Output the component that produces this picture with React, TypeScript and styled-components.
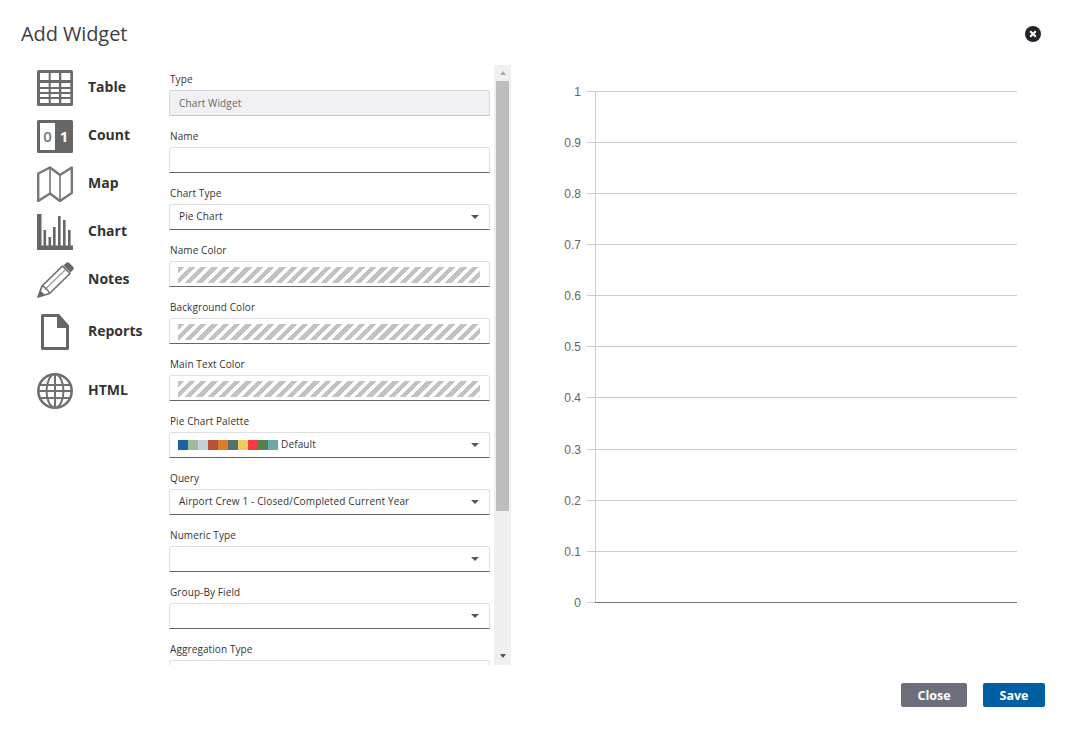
import React from "react";
import styled, { createGlobalStyle } from "styled-components";

const GlobalStyle = createGlobalStyle`
  html, body {
    margin: 0;
    padding: 0;
    background: #fff;
    font-family: "Open Sans", "Liberation Sans", sans-serif;
  }
`;

const TableIcon = () => (
  <svg width="36" height="36" viewBox="0 0 36 36">
    <rect width="36" height="36" rx="1.5" fill="#6b6b6b" />
    {[[3, 8.7], [13.7, 8.3], [24.3, 9]].map(([x, w]) =>
      [[3, 7], [13, 4], [19, 3], [24, 3], [29, 4]].map(([y, h]) => (
        <rect key={`${x}-${y}`} x={x} y={y} width={w} height={h} fill="#fff" />
      ))
    )}
  </svg>
);

const CountIcon = () => (
  <svg width="36" height="33" viewBox="0 0 36 33">
    <rect width="36" height="33" rx="1.5" fill="#666" />
    <rect x="3" y="3" width="15" height="27" fill="#fff" />
    <text x="10.5" y="22" textAnchor="middle" fontFamily="Open Sans" fontWeight="600" fontSize="15" fill="#777">0</text>
    <text x="27" y="22" textAnchor="middle" fontFamily="Open Sans" fontWeight="700" fontSize="15" fill="#fff">1</text>
  </svg>
);

const MapIcon = () => (
  <svg width="36" height="36" viewBox="0 0 36 36" fill="none" stroke="#777" strokeWidth="2.4">
    <path d="M1.2 7.5 13 1.5l10 7.5L34.8 1.5v25.5L23 35 13 27.5 1.2 35z" strokeLinejoin="round" />
    <path d="M13 1.5V27.5M23 9V35" strokeWidth="1.6" />
  </svg>
);

const ChartIcon = () => (
  <svg width="36" height="36" viewBox="0 0 36 36" fill="#666">
    <rect x="0" y="0" width="4.5" height="36" />
    <rect x="0" y="31.5" width="36" height="4.5" />
    <rect x="6.5" y="16" width="2.6" height="17" />
    <rect x="11.5" y="23" width="2.6" height="10" />
    <rect x="16" y="13" width="2.6" height="20" />
    <rect x="21" y="2" width="2.6" height="31" />
    <rect x="26" y="6" width="2.6" height="27" />
    <rect x="31" y="16" width="2.6" height="17" />
  </svg>
);

const NotesIcon = () => (
  <svg width="37" height="36" viewBox="0 0 37 36">
    <path d="M1 35 5 24 25.5 4l7.5 7.5L12.5 31.5z" fill="#fff" stroke="#6b6b6b" strokeWidth="1.6" strokeLinejoin="round" />
    <path d="M8 27.5 28 8" stroke="#999" strokeWidth="1.2" />
    <path d="M5 24c2.5.5 6.5 4.5 7.5 7.5" fill="none" stroke="#6b6b6b" strokeWidth="1.3" />
    <path d="M1 35l2-7 5 5z" fill="#666" />
    <path d="M26.5 3.5 29 1a2.4 2.4 0 0 1 3.3 0l3.6 3.6a2.4 2.4 0 0 1 0 3.4L33.6 10.5z" fill="#666" />
  </svg>
);

const ReportsIcon = () => (
  <svg width="28" height="36" viewBox="0 0 28 36">
    <path d="M1.5 1.5H17L26.5 12.5V34.5H1.5z" fill="#fff" stroke="#666" strokeWidth="3" strokeLinejoin="round" />
    <path d="M16 0h2L28 11.5V14H16z" fill="#666" />
  </svg>
);

const HtmlIcon = () => (
  <svg width="36" height="36" viewBox="0 0 36 36" fill="none" stroke="#707070">
    <circle cx="18" cy="18" r="16.7" strokeWidth="2.6" />
    <ellipse cx="18" cy="18" rx="8.5" ry="16.7" strokeWidth="2" />
    <path d="M18 1V35M2 12H34M1 18H35M2 25H34" strokeWidth="2" />
  </svg>
);

const widgets = [
  { label: "Table", icon: <TableIcon /> },
  { label: "Count", icon: <CountIcon /> },
  { label: "Map", icon: <MapIcon /> },
  { label: "Chart", icon: <ChartIcon /> },
  { label: "Notes", icon: <NotesIcon /> },
  { label: "Reports", icon: <ReportsIcon />, tall: true },
  { label: "HTML", icon: <HtmlIcon />, tall: true },
];

const palette = ["#1a5fa8", "#9dbd9a", "#c3d1d6", "#b55238", "#dd7d2a", "#55736e", "#eecb5e", "#f73a3f", "#558050", "#6ba8ac"];

type FieldDef = { label: string; kind: "disabled" | "text" | "select" | "color" | "palette"; value?: string };

const fields: FieldDef[] = [
  { label: "Type", kind: "disabled", value: "Chart Widget" },
  { label: "Name", kind: "text" },
  { label: "Chart Type", kind: "select", value: "Pie Chart" },
  { label: "Name Color", kind: "color" },
  { label: "Background Color", kind: "color" },
  { label: "Main Text Color", kind: "color" },
  { label: "Pie Chart Palette", kind: "palette", value: "Default" },
  { label: "Query", kind: "select", value: "Airport Crew 1 - Closed/Completed Current Year" },
  { label: "Numeric Type", kind: "select" },
  { label: "Group-By Field", kind: "select" },
  { label: "Aggregation Type", kind: "select" },
];

const ticks = ["1", "0.9", "0.8", "0.7", "0.6", "0.5", "0.4", "0.3", "0.2", "0.1", "0"];
const CHART_TOP = 26.85;
const TICK_STEP = 51.1;

const EmptyChart = () => (
  <ChartSvg width="554" height="600" viewBox="0 0 554 600">
    {ticks.map((tick, i) => {
      const y = Math.round(CHART_TOP + i * TICK_STEP) - 0.5;
      const last = i === ticks.length - 1;
      return (
        <g key={tick}>
          <line x1="76" x2="84" y1={y} y2={y} stroke="#ccc" />
          <line x1="84" x2="506" y1={y} y2={y} stroke={last ? "#777" : "#ccc"} />
          <text x="70" y={y + 4} textAnchor="end" fontFamily="Liberation Sans" fontSize="12" fill="#666">
            {tick}
          </text>
        </g>
      );
    })}
    <line x1="84.5" x2="84.5" y1="26" y2="537" stroke="#ccc" />
  </ChartSvg>
);

export default function App() {
  return (
    <Dialog>
      <GlobalStyle />
      <Header>
        <Title>Add Widget</Title>
        <CloseIcon aria-label="Close">
          <svg width="16" height="16" viewBox="0 0 16 16">
            <circle cx="8" cy="8" r="8" fill="#22262b" />
            <path d="M5.2 5.2l5.6 5.6M10.8 5.2l-5.6 5.6" stroke="#fff" strokeWidth="2" />
          </svg>
        </CloseIcon>
      </Header>
      <Body>
        <Sidebar>
          {widgets.map((w) => (
            <WidgetItem key={w.label} $tall={!!w.tall}>
              <WidgetIcon>{w.icon}</WidgetIcon>
              <WidgetLabel>{w.label}</WidgetLabel>
            </WidgetItem>
          ))}
        </Sidebar>
        <Form>
          {fields.map((f) => (
            <FieldGroup key={f.label}>
              <Label>{f.label}</Label>
              <Field $disabled={f.kind === "disabled"}>
                {f.kind === "color" && <Hatch />}
                {f.kind === "palette" &&
                  palette.map((c) => <Swatch key={c} $color={c} />)}
                {f.value && <FieldValue $muted={f.kind === "disabled"} $palette={f.kind === "palette"}>{f.value}</FieldValue>}
                {(f.kind === "select" || f.kind === "palette") && <Caret />}
              </Field>
            </FieldGroup>
          ))}
        </Form>
        <Scrollbar>
          <ArrowUp />
          <Thumb />
          <ArrowDown />
        </Scrollbar>
        <ChartPane>
          <EmptyChart />
        </ChartPane>
      </Body>
      <Footer>
        <Button $color="#6c6e7b" $width={66}>Close</Button>
        <Button $color="#005fa3" $width={62}>Save</Button>
      </Footer>
    </Dialog>
  );
}

const Dialog = styled.div`
  width: 1065px;
  height: 733px;
  display: flex;
  flex-direction: column;
  overflow: hidden;
  background: #fff;
`;

const Header = styled.div`
  height: 65px;
  flex: none;
  display: flex;
  align-items: center;
  justify-content: space-between;
  padding: 2px 24px 0 21px;
  box-sizing: border-box;
`;

const Title = styled.h1`
  margin: 0;
  font-size: 20px;
  font-weight: 400;
  letter-spacing: -0.1px;
  color: #3b3f46;
`;

const CloseIcon = styled.div`
  width: 16px;
  height: 16px;
  cursor: pointer;
  svg {
    display: block;
  }
`;

const Body = styled.div`
  height: 600px;
  flex: none;
  display: flex;
  align-items: stretch;
`;

const Sidebar = styled.div`
  width: 169px;
  flex: none;
  box-sizing: border-box;
  padding: 3px 0 0 37px;
  display: flex;
  flex-direction: column;
`;

const WidgetItem = styled.div<{ $tall: boolean }>`
  display: flex;
  align-items: center;
  height: ${(p) => (p.$tall ? "48px" : "40px")};
  margin-bottom: ${(p) => (p.$tall ? "11px" : "8px")};
  cursor: pointer;
`;

const WidgetIcon = styled.div`
  width: 36px;
  margin-right: 15px;
  display: flex;
  justify-content: center;
  svg {
    display: block;
    flex: none;
  }
`;

const WidgetLabel = styled.span`
  margin-bottom: 4px;
  font-size: 14px;
  font-weight: 700;
  color: #333;
`;

const Form = styled.div`
  width: 321px;
  flex: none;
  padding-top: 7px;
  box-sizing: border-box;
  overflow: hidden;
`;

const FieldGroup = styled.div`
  margin-bottom: 13px;
`;

const Label = styled.div`
  height: 15px;
  line-height: 15px;
  margin-bottom: 3px;
  padding-left: 1px;
  font-size: 10px;
  color: #333;
  letter-spacing: 0.1px;
`;

const Field = styled.div<{ $disabled: boolean }>`
  position: relative;
  height: 26px;
  box-sizing: border-box;
  display: flex;
  align-items: center;
  padding: 0 9px 0 8px;
  border: 1px solid ${(p) => (p.$disabled ? "#d4d4da" : "#e0e0e0")};
  border-bottom: ${(p) => (p.$disabled ? "1px solid #c8c8ce" : "1px solid #666")};
  border-radius: 3px 3px 0 0;
  background: ${(p) => (p.$disabled ? "#f0f0f5" : "#fff")};
`;

const FieldValue = styled.span<{ $muted: boolean; $palette: boolean }>`
  font-size: 10px;
  letter-spacing: 0.14px;
  margin-left: ${(p) => (p.$palette ? "3px" : "1px")};
  margin-bottom: ${(p) => (p.$muted ? "0" : "2px")};
  color: ${(p) => (p.$muted ? "#666" : "#333")};
`;

const Hatch = styled.div`
  width: 303px;
  height: 16px;
  margin-top: 1px;
  background: repeating-linear-gradient(135deg, #c2c2c2 0 4.5px, transparent 4.5px 8px);
`;

const Swatch = styled.span<{ $color: string }>`
  width: 10px;
  height: 10px;
  flex: none;
  background: ${(p) => p.$color};
`;

const Caret = styled.span`
  position: absolute;
  right: 10px;
  top: 10px;
  width: 0;
  height: 0;
  border-left: 4.5px solid transparent;
  border-right: 4.5px solid transparent;
  border-top: 4.5px solid #555;
`;

const Scrollbar = styled.div`
  width: 17px;
  flex: none;
  margin-left: 4px;
  background: #f0f0f0;
  display: flex;
  flex-direction: column;
  align-items: center;
`;

const ArrowUp = styled.span`
  margin: 6px 0 6px;
  width: 0;
  height: 0;
  border-left: 3.5px solid transparent;
  border-right: 3.5px solid transparent;
  border-bottom: 4px solid #a8a8a8;
`;

const Thumb = styled.div`
  width: 13px;
  height: 430px;
  background: #bdbdbd;
`;

const ArrowDown = styled.span`
  margin-top: 143px;
  width: 0;
  height: 0;
  border-left: 3.5px solid transparent;
  border-right: 3.5px solid transparent;
  border-top: 4px solid #555;
`;

const ChartPane = styled.div`
  flex: 1;
  min-width: 0;
`;

const ChartSvg = styled.svg`
  display: block;
`;

const Footer = styled.div`
  flex: 1;
  display: flex;
  justify-content: flex-end;
  align-items: flex-start;
  gap: 16px;
  padding: 18px 20px 0 0;
`;

const Button = styled.button<{ $color: string; $width: number }>`
  width: ${(p) => p.$width}px;
  height: 24px;
  padding: 0;
  border: none;
  border-radius: 2px;
  background: ${(p) => p.$color};
  color: #fff;
  font-family: "Open Sans", sans-serif;
  font-size: 12.5px;
  font-weight: 700;
  cursor: pointer;
`;
